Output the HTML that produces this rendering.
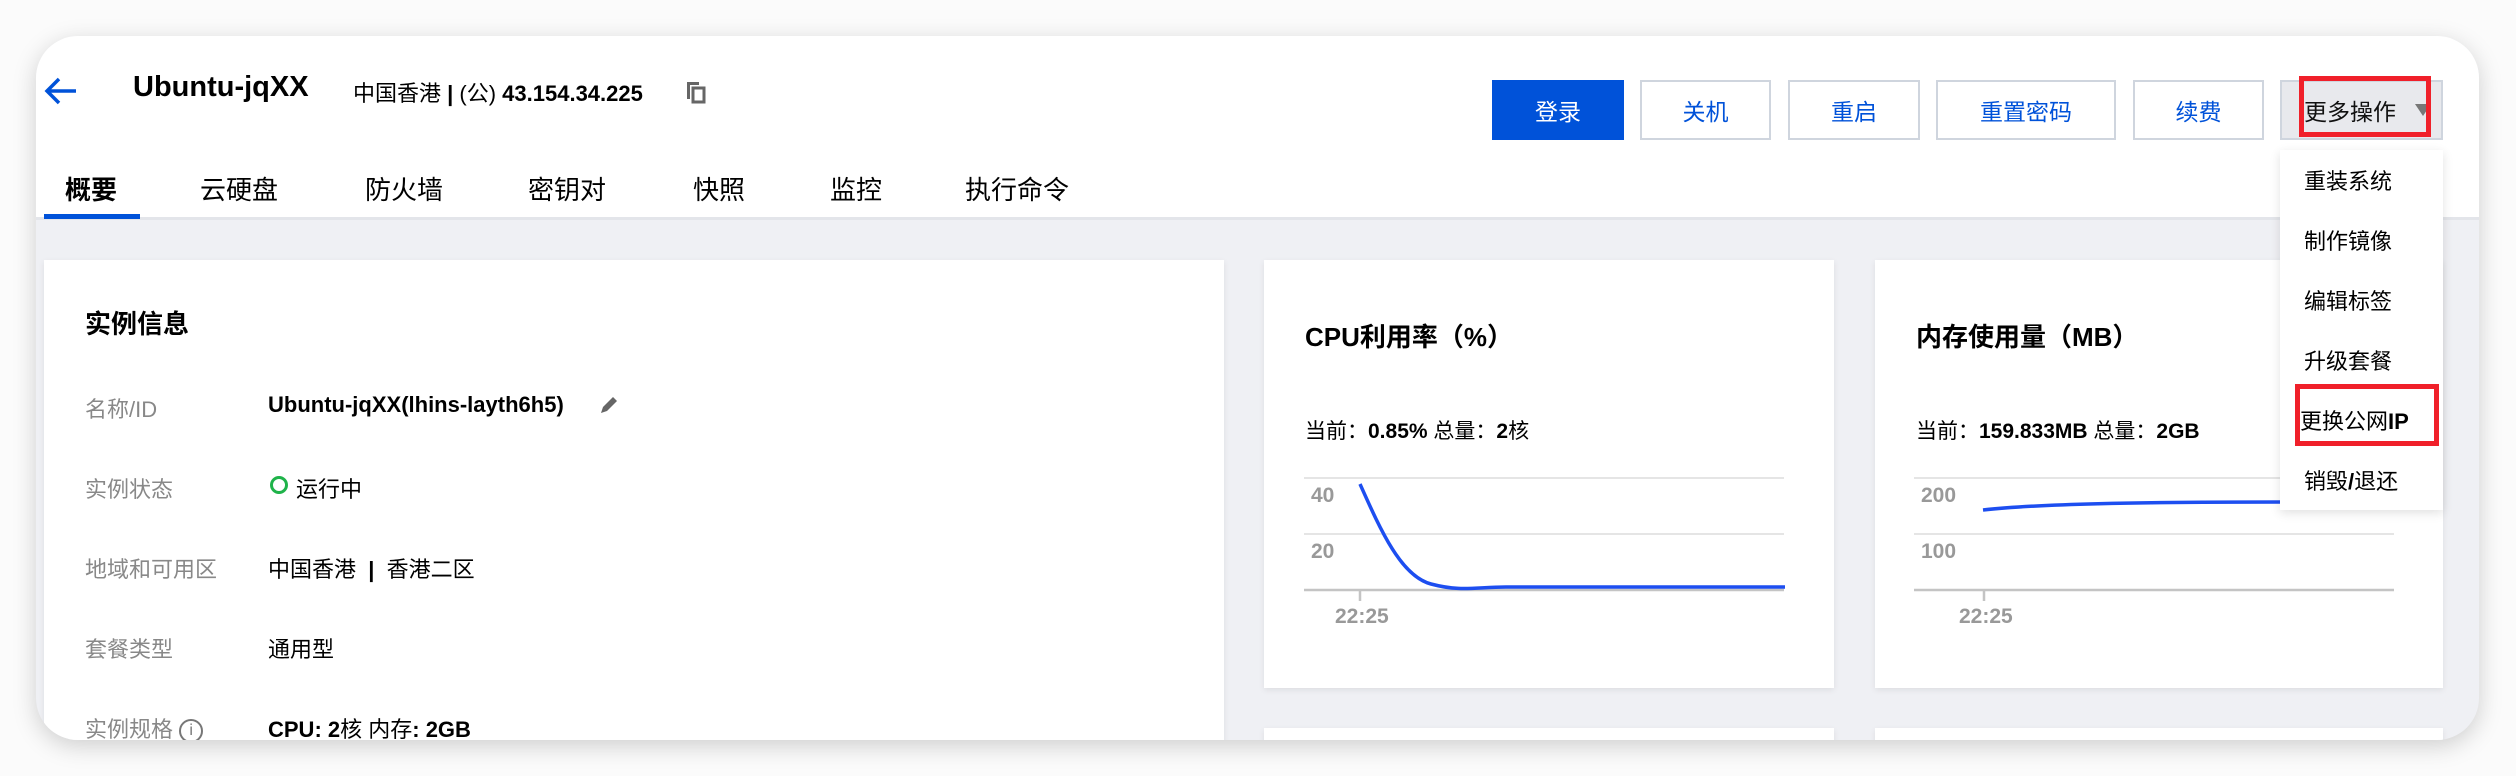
<!DOCTYPE html>
<html><head><meta charset="utf-8"><style>
*{margin:0;padding:0;box-sizing:border-box}
body{width:2516px;height:776px;background:#fbfbfb;font-family:"Liberation Sans","Noto Sans CJK SC",sans-serif;position:relative;overflow:hidden;color:#000}
.win{position:absolute;left:36px;top:36px;width:2443px;height:704px;background:#eff0f4;border-radius:42px;overflow:hidden;box-shadow:0 6px 24px rgba(0,0,0,.18)}
.a{position:absolute;white-space:nowrap}
.head{position:absolute;left:0;top:0;width:100%;height:184px;background:#fff;border-bottom:3px solid #e3e5ea}
.btn{position:absolute;top:44px;height:60px;border:2px solid #cfd5de;background:#fff;color:#0052d9;font-size:23px;display:flex;align-items:center;justify-content:center}
.card{position:absolute;background:#fff;box-shadow:0 2px 6px rgba(0,0,0,.08)}
.lbl{color:#888;font-size:22px}
.val{font-size:22px}
.dd div{position:absolute;left:24px;font-size:22px}
</style></head><body>
<div class="win">
 <div class="head">
  <svg class="a" style="left:8px;top:40px" width="34" height="30" viewBox="0 0 34 30"><path d="M32 15H4M15 3L3 15l12 12" fill="none" stroke="#0052d9" stroke-width="3.5"/></svg>
  <div class="a" style="left:97px;top:35px;font-size:29px;font-weight:bold">Ubuntu-jqXX</div>
  <div class="a" style="left:317px;top:40px;font-size:22px">中国香港 <b>|</b> (公) <b>43.154.34.225</b></div>
  <svg class="a" style="left:649px;top:44px" width="22" height="24" viewBox="0 0 22 24"><path d="M2 2h12v3H5v14H2z" fill="#666"/><rect x="8" y="8" width="11" height="14" fill="none" stroke="#666" stroke-width="3"/></svg>
  <div class="a" style="left:29px;top:134px;font-size:26px;font-weight:bold">概要</div>
  <div class="a" style="left:8px;top:178px;width:96px;height:5px;background:#0052d9"></div>
  <div class="a" style="left:164px;top:134px;font-size:26px">云硬盘</div>
  <div class="a" style="left:329px;top:134px;font-size:26px">防火墙</div>
  <div class="a" style="left:492px;top:134px;font-size:26px">密钥对</div>
  <div class="a" style="left:657px;top:134px;font-size:26px">快照</div>
  <div class="a" style="left:794px;top:134px;font-size:26px">监控</div>
  <div class="a" style="left:929px;top:134px;font-size:26px">执行命令</div>
  <div class="btn" style="left:1456px;width:132px;background:#0052d9;border-color:#0052d9;color:#fff">登录</div>
  <div class="btn" style="left:1604px;width:131px">关机</div>
  <div class="btn" style="left:1752px;width:132px">重启</div>
  <div class="btn" style="left:1900px;width:180px">重置密码</div>
  <div class="btn" style="left:2097px;width:131px">续费</div>
  <div class="btn" style="left:2244px;width:163px;background:#e8e9ed;color:#111;justify-content:flex-start;padding-left:22px">更多操作<span style="position:absolute;right:10px;top:22px;border:8px solid transparent;border-top:12px solid #777"></span></div>
  <div class="a" style="left:2263px;top:40px;width:132px;height:61px;border:5px solid #f0202a"></div>
 </div>
 <div class="card" style="left:8px;top:224px;width:1180px;height:520px">
  <div class="a" style="left:41px;top:44px;font-size:26px;font-weight:bold">实例信息</div>
  <div class="a lbl" style="left:41px;top:132px">名称/ID</div>
  <div class="a val" style="left:224px;top:132px;font-weight:bold">Ubuntu-jqXX(lhins-layth6h5)</div>
  <svg class="a" style="left:554px;top:134px" width="22" height="22" viewBox="0 0 22 22"><path d="M3 19l2-6L15 3l4 4L9 17z" fill="#666"/></svg>
  <div class="a lbl" style="left:41px;top:212px">实例状态</div>
  <div class="a" style="left:226px;top:216px;width:18px;height:18px;border:3.5px solid #1fb34a;border-radius:50%"></div>
  <div class="a val" style="left:252px;top:212px">运行中</div>
  <div class="a lbl" style="left:41px;top:292px">地域和可用区</div>
  <div class="a val" style="left:224px;top:292px">中国香港 &nbsp;<b>|</b>&nbsp; 香港二区</div>
  <div class="a lbl" style="left:41px;top:372px">套餐类型</div>
  <div class="a val" style="left:224px;top:372px">通用型</div>
  <div class="a lbl" style="left:41px;top:452px">实例规格 <span style="display:inline-block;width:24px;height:24px;border:2.5px solid #777;border-radius:50%;font-size:16px;text-align:center;line-height:19px;color:#777;vertical-align:middle">i</span></div>
  <div class="a val" style="left:224px;top:452px;font-weight:bold">CPU: 2<span style="font-weight:normal">核 内存</span>: 2GB</div>
 </div>
 <div class="card" style="left:1228px;top:224px;width:570px;height:428px">
  <div class="a" style="left:41px;top:57px;font-size:26px;font-weight:bold">CPU利用率（%）</div>
  <div class="a" style="left:41px;top:155px;font-size:21px">当前：<b>0.85%</b> 总量：<b>2</b>核</div>
 </div>
 <div class="card" style="left:1839px;top:224px;width:568px;height:428px">
  <div class="a" style="left:41px;top:57px;font-size:26px;font-weight:bold">内存使用量（MB）</div>
  <div class="a" style="left:41px;top:155px;font-size:21px">当前：<b>159.833MB</b> 总量：<b>2GB</b></div>
 </div>
 <svg class="a" style="left:0;top:0" width="2443" height="704">
  <g stroke="#e5e5e5" stroke-width="2"><line x1="1268" y1="442" x2="1748" y2="442"/><line x1="1268" y1="498" x2="1748" y2="498"/><line x1="1878" y1="442" x2="2358" y2="442"/><line x1="1878" y1="498" x2="2358" y2="498"/></g>
  <g stroke="#c4c4c4" stroke-width="2.5"><line x1="1268" y1="554" x2="1748" y2="554"/><line x1="1878" y1="554" x2="2358" y2="554"/><line x1="1324" y1="555" x2="1324" y2="565"/><line x1="1948" y1="555" x2="1948" y2="565"/></g>
  <g fill="#999" font-size="21" font-weight="bold" font-family="Liberation Sans"><text x="1275" y="466">40</text><text x="1275" y="522">20</text><text x="1299" y="587">22:25</text><text x="1885" y="466">200</text><text x="1885" y="522">100</text><text x="1923" y="587">22:25</text></g>
  <path d="M1324 448C1345 495 1365 540 1395 548S1440 551 1470 551H1749" fill="none" stroke="#1d4ef0" stroke-width="3.5"/>
  <path d="M1947 474C2000 468 2100 466 2250 466" fill="none" stroke="#1d4ef0" stroke-width="3.5"/>
 </svg>
 <div class="card" style="left:1228px;top:692px;width:570px;height:40px"></div>
 <div class="card" style="left:1839px;top:692px;width:568px;height:40px"></div>
 <div class="a dd" style="left:2244px;top:114px;width:163px;height:360px;background:#fff;box-shadow:0 3px 10px rgba(0,0,0,.12)">
  <div style="top:14px">重装系统</div>
  <div style="top:74px">制作镜像</div>
  <div style="top:134px">编辑标签</div>
  <div style="top:194px">升级套餐</div>
  <div style="top:254px;left:20px">更换公网<b>IP</b></div>
  <div style="top:314px">销毁<b>/</b>退还</div>
  <div style="position:absolute;left:15px;top:234px;width:144px;height:62px;border:5px solid #f0202a"></div>
 </div>
</div>
</body></html>
